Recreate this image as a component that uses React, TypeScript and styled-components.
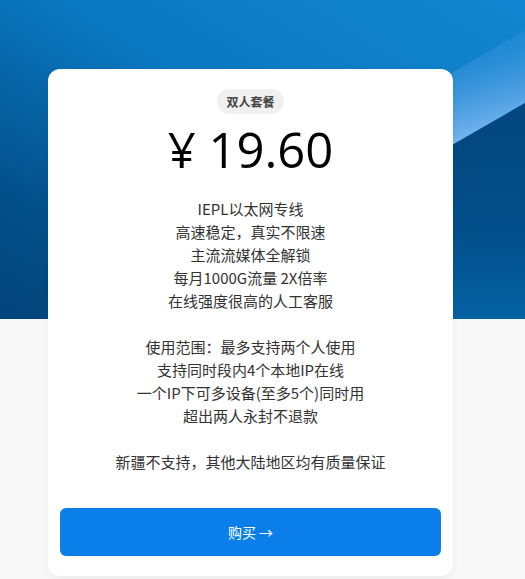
import React from "react";
import styled, { createGlobalStyle } from "styled-components";

const GlobalStyle = createGlobalStyle`
    html, body {
        margin: 0;
        padding: 0;
        background: #f8f8f8;
    }
    body {
        font-family: "Noto Sans", "Noto Sans CJK SC", sans-serif;
    }
`;

const Page = styled.div`
    display: grid;
    grid-template-columns: 1fr;
    min-height: 579px;
    background: #f8f8f8;
`;

const Hero = styled.div`
    grid-area: 1 / 1;
    height: 319px;
    svg {
        display: block;
        width: 100%;
        height: 100%;
    }
`;

const CardSlot = styled.div`
    grid-area: 1 / 1;
    padding: 69px 0 3px 48px;
`;

const Card = styled.div`
    width: 405px;
    box-sizing: border-box;
    background: #fff;
    border-radius: 12px;
    box-shadow: 0 2px 6px rgba(0, 0, 0, 0.06);
    padding: 20px 12px 20px;
    display: flex;
    flex-direction: column;
    align-items: center;
`;

const Badge = styled.span`
    height: 25px;
    line-height: 25px;
    padding: 0 9px;
    border-radius: 13px;
    background: #f0f0f0;
    color: #444;
    font-size: 12px;
    font-weight: 700;
    font-family: "Noto Sans CJK SC", sans-serif;
`;

const Price = styled.div`
    margin-top: 2px;
    font-family: "Open Sans", "Noto Sans CJK SC", sans-serif;
    font-size: 49px;
    font-weight: 400;
    line-height: 66px;
    color: #000;
`;

const Features = styled.p`
    margin: 15px 0 0;
    text-align: center;
    font-family: "Noto Sans CJK SC", sans-serif;
    font-size: 15px;
    line-height: 23px;
    color: #333;
`;

const BuyButton = styled.button`
    margin-top: 35px;
    width: 100%;
    height: 48px;
    border: none;
    border-radius: 6px;
    background: #0b7fe9;
    color: #fff;
    font-family: "Noto Sans CJK SC", sans-serif;
    font-size: 14px;
    cursor: pointer;
`;

const lines = [
    "IEPL以太网专线",
    "高速稳定，真实不限速",
    "主流流媒体全解锁",
    "每月1000G流量 2X倍率",
    "在线强度很高的人工客服",
    "",
    "使用范围：最多支持两个人使用",
    "支持同时段内4个本地IP在线",
    "一个IP下可多设备(至多5个)同时用",
    "超出两人永封不退款",
    "",
    "新疆不支持，其他大陆地区均有质量保证",
];

function HeroArt() {
    return (
        <svg viewBox="0 0 525 319" preserveAspectRatio="none">
            <defs>
                <linearGradient id="sky" x1="1" y1="0" x2="0" y2="1">
                    <stop offset="0" stopColor="#1286d0" />
                    <stop offset="0.45" stopColor="#0a78c0" />
                    <stop offset="0.8" stopColor="#034f8a" />
                    <stop offset="1" stopColor="#02447a" />
                </linearGradient>
                <linearGradient id="glow" x1="0" y1="0" x2="0.2" y2="1">
                    <stop offset="0" stopColor="#3a92dc" stopOpacity="0" />
                    <stop offset="1" stopColor="#8cc0f8" stopOpacity="0.95" />
                </linearGradient>
                <linearGradient id="deep" x1="0" y1="0" x2="0" y2="1">
                    <stop offset="0" stopColor="#02467d" />
                    <stop offset="0.6" stopColor="#034f8b" />
                    <stop offset="1" stopColor="#0462a2" />
                </linearGradient>
            </defs>
            <rect x="0" y="0" width="525" height="319" fill="url(#sky)" />
            <polygon points="525,30 440,80 440,152 525,103" fill="url(#glow)" />
            <polygon points="525,103 440,152 440,319 525,319" fill="url(#deep)" />
        </svg>
    );
}

export default function App() {
    return (
        <Page>
            <GlobalStyle />
            <Hero>
                <HeroArt />
            </Hero>
            <CardSlot>
                <Card>
                    <Badge>双人套餐</Badge>
                    <Price>¥ 19.60</Price>
                    <Features>
                        {lines.map((line, i) => (
                            <React.Fragment key={i}>
                                {line}
                                <br />
                            </React.Fragment>
                        ))}
                    </Features>
                    <BuyButton>购买 →</BuyButton>
                </Card>
            </CardSlot>
        </Page>
    );
}
